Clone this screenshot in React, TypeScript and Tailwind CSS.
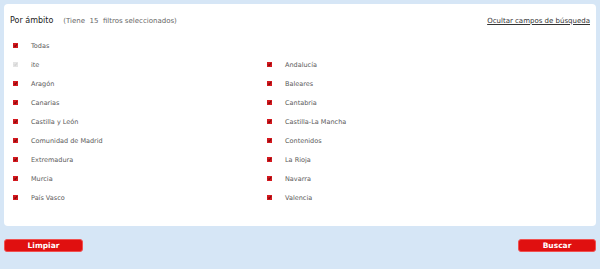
import React from 'react';

type Item = { label: string; checked: boolean; disabled?: boolean };

const LEFT: Item[] = [
  { label: 'Todas', checked: true },
  { label: 'ite', checked: false, disabled: true },
  { label: 'Aragón', checked: true },
  { label: 'Canarias', checked: true },
  { label: 'Castilla y León', checked: true },
  { label: 'Comunidad de Madrid', checked: true },
  { label: 'Extremadura', checked: true },
  { label: 'Murcia', checked: true },
  { label: 'País Vasco', checked: true },
];

const RIGHT: (Item | null)[] = [
  null,
  { label: 'Andalucía', checked: true },
  { label: 'Baleares', checked: true },
  { label: 'Cantabria', checked: true },
  { label: 'Castilla-La Mancha', checked: true },
  { label: 'Contenidos', checked: true },
  { label: 'La Rioja', checked: true },
  { label: 'Navarra', checked: true },
  { label: 'Valencia', checked: true },
];

function Check({ disabled }: { disabled?: boolean }) {
  return (
    <svg width="5" height="5" viewBox="0 0 5 5" className="shrink-0 block mb-[2px]">
      <rect x="0" y="0" width="5" height="5" fill={disabled ? '#e4e4e4' : '#d4181e'} />
      <path d="M1.2 2.6 L2.1 3.6 L3.9 1.3" fill="none" stroke={disabled ? '#c8c8c8' : '#4a0000'} strokeWidth="0.9" />
    </svg>
  );
}

function Row({ item }: { item: Item | null }) {
  if (!item) return <div className="h-[19px]" />;
  return (
    <div className="h-[19px] flex items-center">
      <Check disabled={item.disabled} />
      <span className="ml-[13px] text-[6.5px] leading-none text-[#5a5a5a]">{item.label}</span>
    </div>
  );
}

export default function App() {
  return (
    <div className="w-[600px] h-[269px] bg-[#d6e6f6] px-[4px] pt-[4px] font-['DejaVu_Sans',Verdana,sans-serif]">
      <div className="bg-white rounded-[4px] pt-[10px] pb-[18px]">
        {/* Header */}
        <div className="h-[14px] flex items-center justify-between pl-[6px] pr-[6px]">
          <div className="flex items-center">
            <span className="text-[8px] text-[#222]">Por ámbito</span>
            <span className="ml-[10px] text-[7px] text-[#666] whitespace-pre">(Tiene  15  filtros seleccionados)</span>
          </div>
          <a className="text-[7px] text-[#333] underline">Ocultar campos de búsqueda</a>
        </div>

        {/* Checkbox list */}
        <div className="mt-[9px] pl-[9px] grid grid-cols-[254px_1fr]">
          <div>
            {LEFT.map((it) => (
              <Row key={it.label} item={it} />
            ))}
          </div>
          <div>
            {RIGHT.map((it, i) => (
              <Row key={i} item={it} />
            ))}
          </div>
        </div>
      </div>

      {/* Buttons */}
      <div className="mt-[13px] flex justify-between">
        <button className="w-[79px] h-[13px] rounded-[3px] bg-[#e01010] border border-[#f05050] text-white text-[7.5px] font-bold flex items-center justify-center leading-none">
          Limpiar
        </button>
        <button className="w-[78px] h-[13px] rounded-[3px] bg-[#e01010] border border-[#f05050] text-white text-[7.5px] font-bold flex items-center justify-center leading-none">
          Buscar
        </button>
      </div>
    </div>
  );
}
